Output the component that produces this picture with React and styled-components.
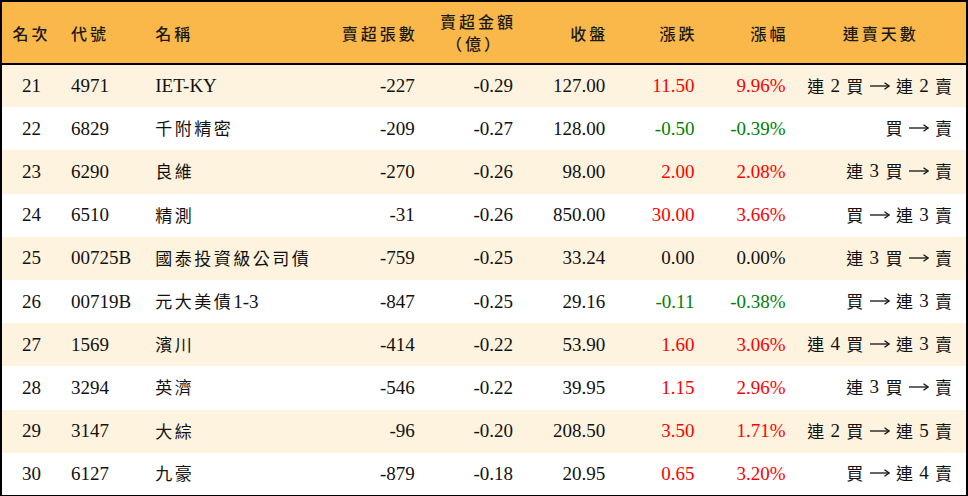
import React from "react";
import styled, { createGlobalStyle } from "styled-components";

const GlobalStyle = createGlobalStyle`
  html, body {
    margin: 0;
    padding: 0;
    background: #ffffff;
  }
  body {
    font-family: "Liberation Serif", "Noto Sans CJK TC", serif;
    color: #111111;
  }
`;

const rows = [
  { rank: 21, code: "4971", name: "IET-KY", lots: "-227", amount: "-0.29", close: "127.00", chg: "11.50", pct: "9.96%", streak: ["連", "2", "買", "→", "連", "2", "賣"] },
  { rank: 22, code: "6829", name: "千附精密", lots: "-209", amount: "-0.27", close: "128.00", chg: "-0.50", pct: "-0.39%", streak: ["買", "→", "賣"] },
  { rank: 23, code: "6290", name: "良維", lots: "-270", amount: "-0.26", close: "98.00", chg: "2.00", pct: "2.08%", streak: ["連", "3", "買", "→", "賣"] },
  { rank: 24, code: "6510", name: "精測", lots: "-31", amount: "-0.26", close: "850.00", chg: "30.00", pct: "3.66%", streak: ["買", "→", "連", "3", "賣"] },
  { rank: 25, code: "00725B", name: "國泰投資級公司債", lots: "-759", amount: "-0.25", close: "33.24", chg: "0.00", pct: "0.00%", streak: ["連", "3", "買", "→", "賣"] },
  { rank: 26, code: "00719B", name: "元大美債1-3", lots: "-847", amount: "-0.25", close: "29.16", chg: "-0.11", pct: "-0.38%", streak: ["買", "→", "連", "3", "賣"] },
  { rank: 27, code: "1569", name: "濱川", lots: "-414", amount: "-0.22", close: "53.90", chg: "1.60", pct: "3.06%", streak: ["連", "4", "買", "→", "連", "3", "賣"] },
  { rank: 28, code: "3294", name: "英濟", lots: "-546", amount: "-0.22", close: "39.95", chg: "1.15", pct: "2.96%", streak: ["連", "3", "買", "→", "賣"] },
  { rank: 29, code: "3147", name: "大綜", lots: "-96", amount: "-0.20", close: "208.50", chg: "3.50", pct: "1.71%", streak: ["連", "2", "買", "→", "連", "5", "賣"] },
  { rank: 30, code: "6127", name: "九豪", lots: "-879", amount: "-0.18", close: "20.95", chg: "0.65", pct: "3.20%", streak: ["買", "→", "連", "4", "賣"] },
];

const widths = [60, 84, 184, 95, 98, 92, 89, 91, 171];

const toneOf = (v) => {
  if (v.startsWith("-")) return "down";
  if (parseFloat(v) === 0) return "flat";
  return "up";
};

// split a name into CJK runs and latin runs
const splitName = (s) => s.match(/[\u3400-\u9fff]+|[^\u3400-\u9fff]+/g) || [];
const isCjk = (s) => /[\u3400-\u9fff]/.test(s);

const Table = styled.table`
  width: 968px;
  border-collapse: collapse;
  table-layout: fixed;
  border: 2px solid #000000;
`;

const HeadRow = styled.tr`
  height: 63px;
  background: #fab84b;
  border-bottom: 2px solid #000000;
`;

const Th = styled.th`
  font-family: "Noto Sans CJK TC", serif;
  font-weight: 500;
  font-size: 16px;
  letter-spacing: 3px;
  line-height: 22px;
  color: #1a1a1a;
  padding: 0 ${(p) => (p.$align === "right" ? "7px" : "10px")} 0 10px;
  text-align: ${(p) => p.$align || "left"};
  vertical-align: middle;
`;

const HeadLine = styled.span`
  display: block;
  line-height: 23.5px;
`;

const SubLabel = styled(HeadLine)`
  margin-right: 13px;
  margin-top: -1px;
`;

const Row = styled.tr`
  height: 43.2px;
  background: ${(p) => (p.$shade ? "#fef3de" : "#ffffff")};
`;

const Td = styled.td`
  font-family: "Liberation Serif", "Noto Sans CJK TC", serif;
  font-size: 19px;
  line-height: 22px;
  padding: 0 10px;
  text-align: ${(p) => p.$align || "left"};
  vertical-align: middle;
  white-space: nowrap;
  color: ${(p) =>
    p.$tone === "up" ? "#ff0000" : p.$tone === "down" ? "#008000" : "#111111"};
`;

const CjkRun = styled.span`
  font-family: "Noto Sans CJK TC", serif;
  font-size: 17px;
  letter-spacing: 2.5px;
`;

const StreakCell = styled(Td)`
  padding-right: 14px;
`;

const StreakItems = styled.span`
  display: inline-flex;
  align-items: center;
  gap: 6.3px;
`;

const StreakWord = styled.span`
  font-family: "Noto Sans CJK TC", serif;
  font-size: 17px;
`;

const StreakNum = styled.span`
  font-family: "Liberation Serif", serif;
  font-size: 19px;
`;

const Arrow = styled.svg`
  width: 20px;
  height: 10px;
`;

const StreakArrow = () => (
  <Arrow viewBox="0 0 20 10">
    <path d="M0 5H18.5" stroke="#111" strokeWidth="1.3" fill="none" />
    <path d="M14.5 1.8L19.2 5L14.5 8.2" stroke="#111" strokeWidth="1.3" fill="none" />
  </Arrow>
);

export default function App() {
  return (
    <>
      <GlobalStyle />
      <Table>
        <colgroup>
          {widths.map((w, i) => (
            <col key={i} style={{ width: w }} />
          ))}
        </colgroup>
        <thead>
          <HeadRow>
            <Th $align="center">名次</Th>
            <Th>代號</Th>
            <Th>名稱</Th>
            <Th $align="right">賣超張數</Th>
            <Th $align="right">
              <HeadLine>賣超金額</HeadLine>
              <SubLabel>（億）</SubLabel>
            </Th>
            <Th $align="right">收盤</Th>
            <Th $align="right">漲跌</Th>
            <Th $align="right">漲幅</Th>
            <Th $align="center">連賣天數</Th>
          </HeadRow>
        </thead>
        <tbody>
          {rows.map((r, i) => (
            <Row key={r.rank} $shade={i % 2 === 0}>
              <Td $align="center">{r.rank}</Td>
              <Td>{r.code}</Td>
              <Td>
                {splitName(r.name).map((part, j) =>
                  isCjk(part) ? <CjkRun key={j}>{part}</CjkRun> : <span key={j}>{part}</span>
                )}
              </Td>
              <Td $align="right">{r.lots}</Td>
              <Td $align="right">{r.amount}</Td>
              <Td $align="right">{r.close}</Td>
              <Td $align="right" $tone={toneOf(r.chg)}>{r.chg}</Td>
              <Td $align="right" $tone={toneOf(r.pct)}>{r.pct}</Td>
              <StreakCell $align="right">
                <StreakItems>
                  {r.streak.map((t, j) =>
                    t === "→" ? (
                      <StreakArrow key={j} />
                    ) : /\d/.test(t) ? (
                      <StreakNum key={j}>{t}</StreakNum>
                    ) : (
                      <StreakWord key={j}>{t}</StreakWord>
                    )
                  )}
                </StreakItems>
              </StreakCell>
            </Row>
          ))}
        </tbody>
      </Table>
    </>
  );
}
